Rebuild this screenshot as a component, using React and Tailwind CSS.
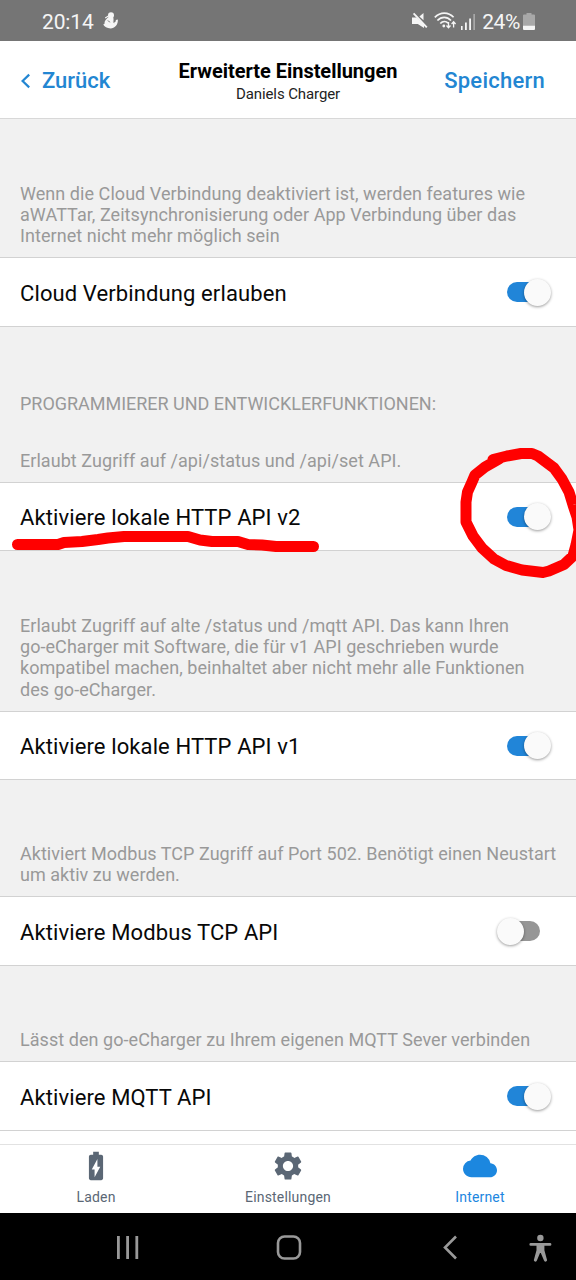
import React from "react";
import { MdBatteryChargingFull, MdSettings, MdCloud } from "react-icons/md";

function StatusBar() {
  return (
    <div className="flex h-[41px] shrink-0 items-center bg-[#757575] pl-[42px] pr-[41px] text-[#f5f5f5]">
      <span className="mt-[3px] text-[21px] leading-none tracking-[-0.15px]">20:14</span>
      <svg className="ml-[9px]" width="15" height="17" viewBox="0 0 15 17" fill="currentColor">
        <circle cx="8" cy="3.200" r="3" />
        <path d="M5.600 5h4.400c1 2 .2 3 .6 4.600.8 1.400 2.400.6 2.200-1.600l2-.6c.6 5-2.800 9-7.200 9C4 16.400 1.400 15 .2 12.600l1.400-.8C1 9 3.400 7 5.600 5z" />
        <path d="M4.600 8.600 7.200 10.200M10.400 9.500l.8 1.600" stroke="#757575" strokeWidth=".8" fill="none" />
        <path d="M2.200 6 5.800 3.800" stroke="currentColor" strokeWidth="1.100" />
      </svg>
      <div className="ml-auto flex items-center">
        <svg className="mt-[1px]" width="16" height="18" viewBox="0 0 16 18" fill="currentColor">
          <path d="M0 5.500h4.500L12 12.600V16L5.800 12H0zM11.500 1v7.200L7.400 4.400z" />
          <path d="M1.600 1.400 14.800 15.400" stroke="currentColor" strokeWidth="1.900" />
        </svg>
        <svg className="ml-[6px] mt-[1px]" width="23" height="18" viewBox="0 0 23 18" fill="none" stroke="currentColor" strokeWidth="1.700">
          <path d="M.8 5.300C6.300-.4 14.400-.4 19.600 5.300M3.400 8.500c4-4.200 9.600-4.200 13.600 0M6.300 11.500c2.400-2.500 5.600-2.500 7.800-.4" />
          <circle cx="9.800" cy="14" r="1.400" fill="currentColor" stroke="none" />
          <path d="M14.500 10v5.500m-2-2 2 2.200 2-2.200M19.600 15.500V10m-2 2 2-2.200 2 2.200" strokeWidth="1.300" />
        </svg>
        <svg className="ml-[4px] mt-[1px]" width="15" height="17" viewBox="0 0 15 17" fill="currentColor">
          <path d="M0 13h1.600v4H0zM4 9.500h1.800V17H4zM8.200 5.500H10V17H8.200z" />
          <path d="M12.300 1H14v16h-1.700z" opacity=".4" />
        </svg>
        <span className="ml-[6px] mt-[3px] text-[21px] leading-none tracking-[-0.4px]">24%</span>
        <svg className="ml-[3px] mt-[1px]" width="12" height="17" viewBox="0 0 12 17" fill="currentColor">
          <path d="M3.500 0h5v1.600H11a1 1 0 0 1 1 1V13H0V2.600a1 1 0 0 1 1-1h2.500z" opacity=".4" />
          <path d="M0 12.800h12V16a1 1 0 0 1-1 1H1a1 1 0 0 1-1-1z" />
        </svg>
      </div>
    </div>
  );
}

function Header() {
  return (
    <header className="grid h-[78px] shrink-0 grid-cols-[150px_1fr_150px] items-center border-b border-[#d8d8d8] bg-white">
      <button className="flex items-center pl-[20px] pt-[2px] text-[22px] font-medium text-[#2386d2]">
        <svg width="11" height="16" viewBox="0 0 11 16" fill="none" stroke="currentColor" strokeWidth="2.200">
          <path d="M9.200 1.600 2.600 8l6.600 6.400" />
        </svg>
        <span className="ml-[11px]">Zurück</span>
      </button>
      <div className="flex flex-col items-center whitespace-nowrap pt-[4px] text-black">
        <h1 className="text-[20px] font-bold leading-[24px] tracking-[-0.03px]">Erweiterte Einstellungen</h1>
        <p className="text-[15px] leading-[22px] tracking-[-0.1px] text-[#222]">Daniels Charger</p>
      </div>
      <button className="pr-[31px] pt-[2px] text-right text-[22px] font-medium tracking-[0.25px] text-[#2386d2]">Speichern</button>
    </header>
  );
}

function Toggle({ on }) {
  return on ? (
    <span className="flex h-[20px] w-[46px] items-center rounded-full bg-[linear-gradient(90deg,#2185d8_30px,transparent_30px)]">
      <span className="ml-[17px] size-[27px] shrink-0 rounded-full bg-[#fafafa] shadow-[0_1px_3px_rgba(0,0,0,0.4)]" />
    </span>
  ) : (
    <span className="mr-[13px] flex h-[20px] w-[34px] items-center rounded-full bg-[#969696]">
      <span className="-ml-[9px] size-[27px] shrink-0 rounded-full bg-[#fafafa] shadow-[0_1px_3px_rgba(0,0,0,0.4)]" />
    </span>
  );
}

function Note({ className, lines }) {
  return (
    <div className={"flex shrink-0 flex-col justify-end whitespace-nowrap pb-[11px] pl-5 text-[18px] text-[#999] " + className}>
      {lines.map((line) => (
        <p key={line}>{line}</p>
      ))}
    </div>
  );
}

function Row({ label, on = true, className = "h-[70px]" }) {
  return (
    <div className={"flex shrink-0 items-center justify-between border-y border-[#d2d2d2] bg-white pl-5 pr-[23px] " + className}>
      <span className="mt-[2px] text-[22px] tracking-[0.11px] text-[#080808]">{label}</span>
      <Toggle on={on} />
    </div>
  );
}

function Tab({ icon, label, active }) {
  return (
    <button className={"flex flex-col items-center pt-[4px] " + (active ? "text-[#1c87df]" : "text-[#5b6775]")}>
      <span className="flex h-[34px] items-center">{icon}</span>
      <span className="mt-[4px] text-[14px] leading-[20px] tracking-[0.18px]">{label}</span>
    </button>
  );
}

function SystemNav() {
  return (
    <nav className="flex h-[67px] shrink-0 items-center bg-black pl-[116px] pr-[24px] text-[#999]">
      <svg width="24" height="26" viewBox="0 0 24 26" fill="none" stroke="currentColor" strokeWidth="2.800">
        <path d="M2.400 2v23M11.600 2v23M20.800 2v23" />
      </svg>
      <svg className="ml-[136px]" width="26" height="26" viewBox="0 0 26 26" fill="none" stroke="currentColor" strokeWidth="2.600">
        <rect x="2" y="2.500" width="22" height="22" rx="6.500" />
      </svg>
      <svg className="ml-[140px]" width="18" height="26" viewBox="0 0 18 26" fill="none" stroke="currentColor" strokeWidth="2.600">
        <path d="M14 2.500 3 13.500l11 11" />
      </svg>
      <svg className="ml-auto mt-[3px]" width="24" height="28" viewBox="0 0 24 28" fill="currentColor">
        <circle cx="12.400" cy="4" r="3.200" />
        <path d="M2.800 9h19.200a1.300 1.300 0 0 1 0 2.800H16.400v4.400l2.500 9.400a1.400 1.400 0 0 1-2.900 1L12.800 19h-.8l-3.100 7.600a1.400 1.400 0 0 1-2.900-1l2.500-9.400v-4.400H2.800a1.300 1.300 0 0 1 0-2.800z" />
      </svg>
    </nav>
  );
}

function Markings() {
  return (
    <svg className="pointer-events-none absolute left-0 top-0" width="576" height="1280" viewBox="0 0 576 1280" fill="none" stroke="#f00" strokeWidth="11" strokeLinecap="round" strokeLinejoin="round">
      <path d="M17.500 544.500H58L64 542.500 82 541.500 98 539.500 108 538 124 536.500H188L200 540 212 541.500H238L248 544.500 262 545 276 546.500H313.500" />
      <path d="M493 459.500 507 456 521 453.500H532L538 456 544 460.500 554 468 562 479 569 492 573 505 577 517 579 530 576 545 573 556 564 564.500 549 571 543 572.500 522 570 506 565.500 494 559 482 548 473 536 466 522V502L467.500 492 472 482 475 475 485 467 499 459" />
    </svg>
  );
}

export default function App() {
  return (
    <div className="relative flex h-[1280px] w-[576px] flex-col overflow-hidden bg-[#f1f1f1] font-['Roboto',sans-serif]">
      <StatusBar />
      <Header />
      <main className="flex h-[1025px] shrink-0 flex-col overflow-hidden">
        <Note
          className="h-[138px] leading-[21px] tracking-[0.055px]"
          lines={[
            "Wenn die Cloud Verbindung deaktiviert ist, werden features wie",
            "aWATTar, Zeitsynchronisierung oder App Verbindung über das",
            "Internet nicht mehr möglich sein",
          ]}
        />
        <Row label="Cloud Verbindung erlauben" />
        <Note className="h-[98px] leading-[21px] tracking-[-0.02px]" lines={["PROGRAMMIERER UND ENTWICKLERFUNKTIONEN:"]} />
        <Note className="h-[57px] leading-[21px] tracking-[0.055px]" lines={["Erlaubt Zugriff auf /api/status und /api/set API."]} />
        <Row label="Aktiviere lokale HTTP API v2" className="h-[69px]" />
        <Note
          className="h-[160px] leading-[21.300px] tracking-[0.055px]"
          lines={[
            "Erlaubt Zugriff auf alte /status und /mqtt API. Das kann Ihren",
            "go-eCharger mit Software, die für v1 API geschrieben wurde",
            "kompatibel machen, beinhaltet aber nicht mehr alle Funktionen",
            "des go-eCharger.",
          ]}
        />
        <Row label="Aktiviere lokale HTTP API v1" className="h-[69px]" />
        <Note
          className="h-[116px] leading-[21px] tracking-[0.035px]"
          lines={["Aktiviert Modbus TCP Zugriff auf Port 502. Benötigt einen Neustart", "um aktiv zu werden."]}
        />
        <Row label="Aktiviere Modbus TCP API" on={false} />
        <Note className="h-[95px] leading-[21px] tracking-[0.055px]" lines={["Lässt den go-eCharger zu Ihrem eigenen MQTT Sever verbinden"]} />
        <Row label="Aktiviere MQTT API" />
        <div className="flex-1 bg-white" />
      </main>
      <footer className="grid h-[69px] shrink-0 grid-cols-3 border-t border-[#e2e2e2] bg-white">
        <Tab icon={<MdBatteryChargingFull size={34} />} label="Laden" />
        <Tab icon={<MdSettings size={34} />} label="Einstellungen" />
        <Tab active icon={<MdCloud size={34} />} label="Internet" />
      </footer>
      <SystemNav />
      <Markings />
    </div>
  );
}
